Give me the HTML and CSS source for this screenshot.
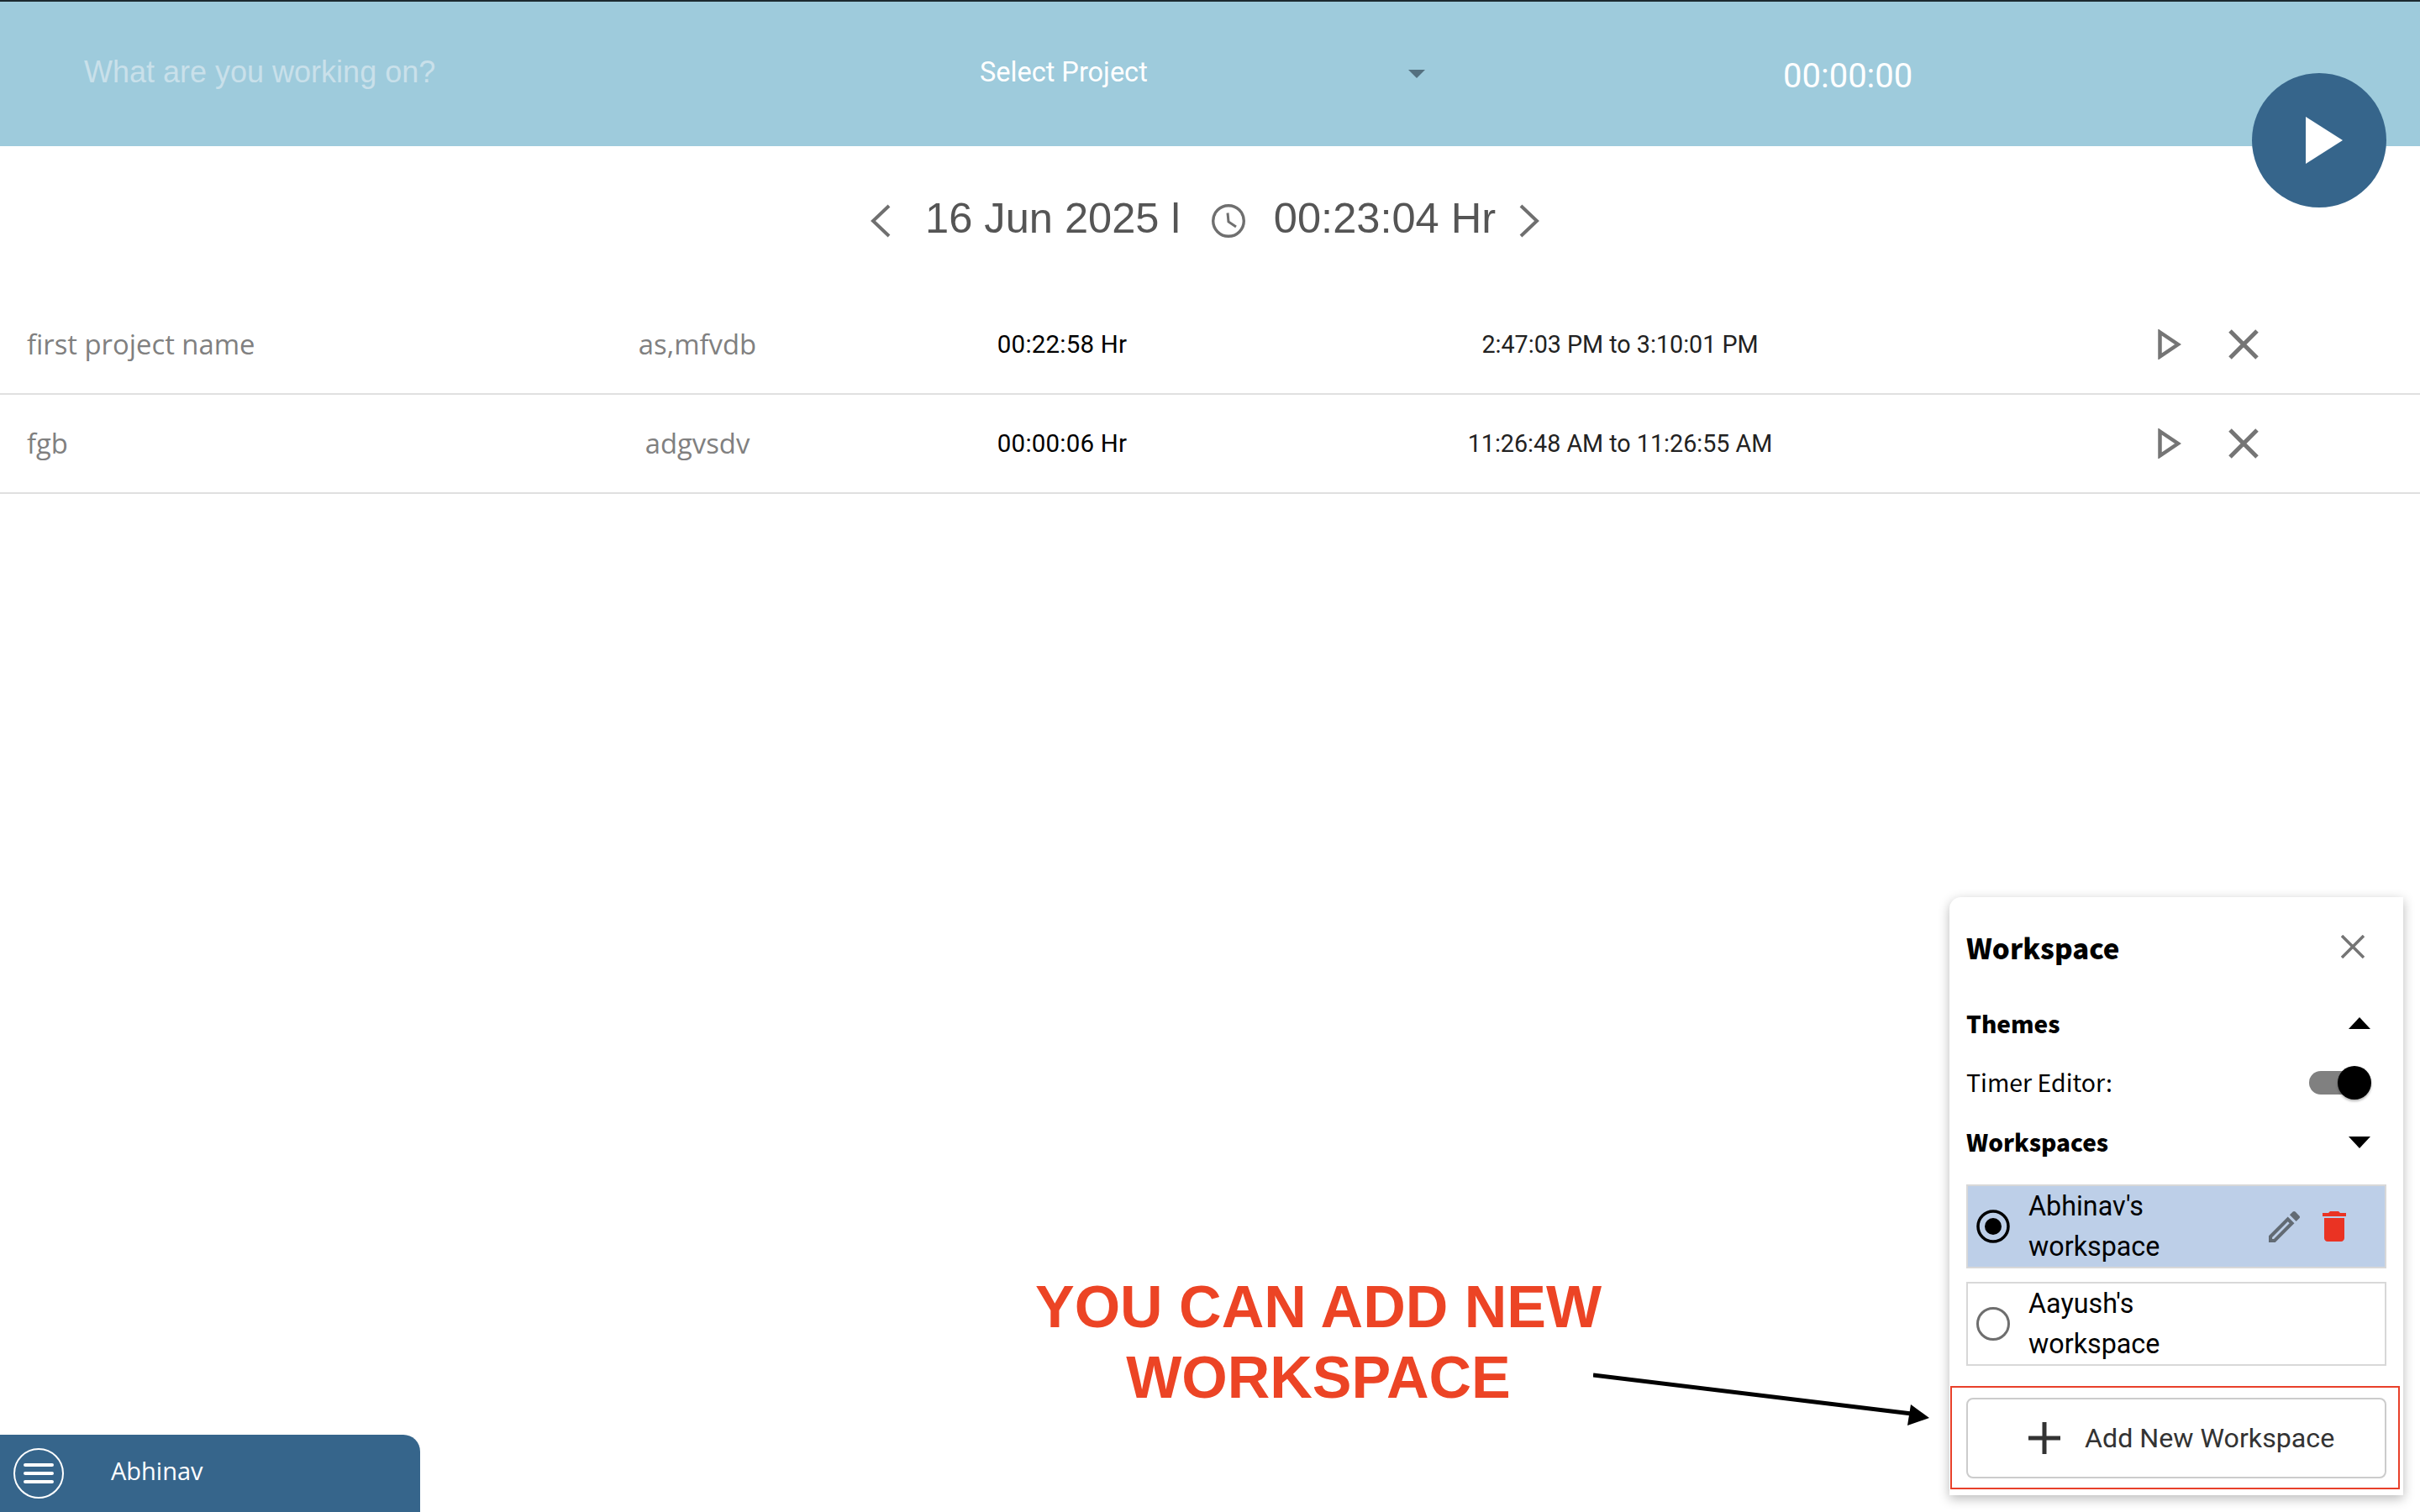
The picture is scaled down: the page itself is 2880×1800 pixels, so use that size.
FILE: index.html
```html
<!DOCTYPE html>
<html lang="en">
<head>
  <meta charset="UTF-8">
  <title>Timer</title>
  <link rel="stylesheet" href="styles.css">
</head>
<body>
<div class="timer-bar">
  <div class="task-input">What are you working on?</div>
  <div class="project-select">
    <span>Select Project</span>
    <svg class="caret" width="20" height="10" viewBox="0 0 20 10"><path d="M0 0h20L10 10z" fill="#54707f"/></svg>
  </div>
  <div class="timer-value">00:00:00</div>
</div>

<div class="date-row">
  <svg class="chev chev-prev" width="26" height="40" viewBox="0 0 26 40"><path d="M23 2 4 20l19 18" fill="none" stroke="#6f6f6f" stroke-width="4"/></svg>
  <span class="date-text">16 Jun 2025 l</span>
  <svg class="clock" width="40" height="40" viewBox="0 0 40 40"><circle cx="20" cy="20" r="18.300" fill="none" stroke="#6f6f6f" stroke-width="3.400"/><path d="M19 10.500 20 21l9 6" fill="none" stroke="#6f6f6f" stroke-width="3"/></svg>
  <span class="date-text">00:23:04 Hr</span>
  <svg class="chev chev-next" width="26" height="40" viewBox="0 0 26 40"><path d="M3 2l19 18L3 38" fill="none" stroke="#6f6f6f" stroke-width="4"/></svg>
</div>

<div class="entries">
  <div class="entry">
    <div class="entry-name">first project name</div>
    <div class="entry-project">as,mfvdb</div>
    <div class="entry-time">00:22:58 Hr</div>
    <div class="entry-range">2:47:03 PM to 3:10:01 PM</div>
    <div class="entry-actions">
      <svg width="28" height="36" viewBox="0 0 28 36"><path d="M2.500 3.500 24 18 2.500 32.500z" fill="none" stroke="#757575" stroke-width="4.500"/></svg>
      <svg width="36" height="36" viewBox="0 0 36 36"><path d="M2 2l32 32M34 2 2 34" stroke="#757575" stroke-width="5"/></svg>
    </div>
  </div>
  <div class="entry">
    <div class="entry-name">fgb</div>
    <div class="entry-project">adgvsdv</div>
    <div class="entry-time">00:00:06 Hr</div>
    <div class="entry-range">11:26:48 AM to 11:26:55 AM</div>
    <div class="entry-actions">
      <svg width="28" height="36" viewBox="0 0 28 36"><path d="M2.500 3.500 24 18 2.500 32.500z" fill="none" stroke="#757575" stroke-width="4.500"/></svg>
      <svg width="36" height="36" viewBox="0 0 36 36"><path d="M2 2l32 32M34 2 2 34" stroke="#757575" stroke-width="5"/></svg>
    </div>
  </div>
</div>

<div class="play-btn">
  <svg width="44" height="56" viewBox="0 0 44 56"><path d="M0 0l44 28L0 56z" fill="#fff"/></svg>
</div>

<div class="note">YOU CAN ADD NEW<br>WORKSPACE</div>
<svg class="note-arrow" width="400" height="70" viewBox="0 0 400 70">
  <path d="M0 5 379 51" stroke="#000" stroke-width="5"/>
  <path d="M378 40l22 16-26 9z" fill="#000"/>
</svg>

<div class="side-tab">
  <svg width="60" height="60" viewBox="0 0 60 60"><circle cx="30" cy="30" r="29" fill="none" stroke="#fff" stroke-width="2"/><path d="M14 20h32M14 30h32M14 40h32" stroke="#fff" stroke-width="4" stroke-linecap="round"/></svg>
  <span>Abhinav</span>
</div>

<div class="panel">
  <div class="panel-head">
    <span class="panel-title">Workspace</span>
    <svg width="28" height="28" viewBox="0 0 28 28"><path d="M1 1l26 26M27 1 1 27" stroke="#757575" stroke-width="3.500"/></svg>
  </div>
  <div class="panel-sec sec-themes">
    <span>Themes</span>
    <svg width="26" height="14" viewBox="0 0 26 14"><path d="M0 14 13 0l13 14z" fill="#000"/></svg>
  </div>
  <div class="timer-editor">
    <span>Timer Editor:</span>
    <div class="switch"><div class="switch-thumb"></div></div>
  </div>
  <div class="panel-sec sec-workspaces">
    <span>Workspaces</span>
    <svg width="26" height="14" viewBox="0 0 26 14"><path d="M0 0h26L13 14z" fill="#000"/></svg>
  </div>
  <div class="ws-item ws-active">
    <svg width="40" height="40" viewBox="0 0 40 40"><circle cx="20" cy="20" r="18" fill="none" stroke="#000" stroke-width="3.500"/><circle cx="20" cy="20" r="10" fill="#000"/></svg>
    <div class="ws-name">Abhinav's workspace</div>
    <div class="ws-tools">
      <svg width="37" height="37" viewBox="3 3 18 18"><path d="M3 17.250V21h3.750L17.810 9.940l-3.750-3.750L3 17.250zM5.920 19H5v-.92l9.060-9.060.92.92L5.920 19zM20.710 7.040c.39-.39.39-1.020 0-1.410l-2.340-2.340c-.2-.2-.45-.29-.71-.29s-.51.09-.7.29l-1.830 1.830 3.750 3.750 1.830-1.830z" fill="#626b74"/></svg>
      <svg width="28" height="36" viewBox="5 3 14 18"><path d="M6 19c0 1.100.9 2 2 2h8c1.100 0 2-.9 2-2V7H6v12zM19 4h-3.500l-1-1h-5l-1 1H5v2h14V4z" fill="#ea3323"/></svg>
    </div>
  </div>
  <div class="ws-item">
    <svg width="40" height="40" viewBox="0 0 40 40"><circle cx="20" cy="20" r="18.500" fill="none" stroke="#6e6e6e" stroke-width="3"/></svg>
    <div class="ws-name">Aayush's workspace</div>
  </div>
  <div class="add-highlight">
    <div class="add-btn">
      <svg width="38" height="38" viewBox="0 0 38 38"><path d="M19 0v38M0 19h38" stroke="#333" stroke-width="5"/></svg>
      <span>Add New Workspace</span>
    </div>
  </div>
</div>
</body>
</html>
```

FILE: styles.css
```css
html, body { margin: 0; padding: 0; }
body { width: 2880px; height: 1800px; background: #fff; position: relative; overflow: hidden; font-family: "Liberation Sans", sans-serif; }
svg { display: block; flex: none; }

.timer-bar { height: 172px; background: #9ecbdc; border-top: 2px solid #1c2a30; display: flex; align-items: flex-start; color: #fff; }
.task-input { margin: 63px 0 0 100px; width: 1066px; font-size: 36px; line-height: 42px; color: #c9e0ea; }
.project-select { margin-top: 65px; width: 530px; display: flex; align-items: center; font-family: Roboto, sans-serif; font-size: 32.500px; line-height: 38px; }
.project-select span { width: 512px; }
.caret { margin-top: 4px; }
.timer-value { margin: 66px 0 0 426px; font-family: Roboto, sans-serif; font-size: 40px; line-height: 46px; }

.date-row { height: 178px; box-sizing: border-box; padding: 0 0 6px 1035px; display: flex; align-items: center; color: #555; }
.date-text { font-size: 50.600px; line-height: 60px; white-space: nowrap; }
.chev { margin-top: 6px; }
.chev-prev { margin-right: 40px; }
.chev-next { margin-left: 27px; }
.clock { margin: 6px 34px 0 37px; }

.entry { height: 116px; border-bottom: 2px solid #e0e0e0; display: grid; grid-template-columns: 600px 460px 408px 920px 1fr; align-items: center; }
.entry-name { padding: 0 0 2px 32px; font-family: "Open Sans", sans-serif; font-size: 32.800px; color: #808080; }
.entry-project { padding-bottom: 2px; text-align: center; font-family: "Open Sans", sans-serif; font-size: 32.800px; color: #808080; }
.entry-time { text-align: center; font-family: Roboto, sans-serif; font-size: 29.500px; letter-spacing: .2px; color: #000; }
.entry-range { text-align: center; font-family: Roboto, sans-serif; font-size: 28.700px; color: #222; }
.entry-actions { padding-left: 180px; display: flex; gap: 56px; }

.play-btn { position: absolute; left: 2680px; top: 87px; width: 160px; height: 160px; border-radius: 50%; background: #36658b; display: flex; align-items: center; justify-content: center; padding-left: 12px; box-sizing: border-box; }

.note { position: absolute; left: 1169px; top: 1514px; width: 800px; text-align: center; font-size: 70px; line-height: 84px; font-weight: 700; color: #ec4425; }
.note-arrow { position: absolute; left: 1896px; top: 1632px; }

.side-tab { position: absolute; left: 0; top: 1708px; width: 500px; height: 92px; box-sizing: border-box; padding: 0 0 8px 16px; background: #36658b; border-top-right-radius: 20px; display: flex; align-items: center; gap: 56px; color: #fff; font-family: "Open Sans", sans-serif; font-size: 29px; }
.side-tab svg { margin-top: 8px; }

.panel { position: absolute; left: 2320px; top: 1068px; width: 540px; height: 712px; box-sizing: border-box; padding: 0 20px; background: #fff; border-top-left-radius: 14px; box-shadow: 0 4px 14px rgba(0, 0, 0, .28); font-family: "Noto Sans CJK JP", sans-serif; }
.panel-head { height: 92px; padding-top: 26px; box-sizing: border-box; display: flex; justify-content: space-between; align-items: center; }
.panel-head svg { margin-right: 26px; }
.panel-title { padding-top: 2px; font-size: 33px; font-weight: 900; color: #000; }
.panel-sec { display: flex; justify-content: space-between; align-items: center; font-size: 28px; font-weight: 900; color: #000; padding-right: 19px; }
.sec-themes { height: 60px; margin-top: 28px; }
.timer-editor { height: 78px; display: flex; justify-content: space-between; align-items: center; font-size: 28.500px; color: #000; }
.sec-workspaces { height: 66px; }
.sec-workspaces svg { margin-top: 2px; }
.switch { position: relative; margin: 3px 22px 0 0; width: 70px; height: 28px; border-radius: 14px; background: #808080; }
.switch-thumb { position: absolute; right: -4px; top: -6px; width: 40px; height: 40px; border-radius: 50%; background: #000; box-shadow: 0 2px 3px rgba(0, 0, 0, .3); }

.ws-item { height: 100px; box-sizing: border-box; border: 2px solid #d8d8d8; display: flex; align-items: center; padding-left: 10px; margin-bottom: 16px; font-family: Roboto, sans-serif; font-size: 32.300px; line-height: 48px; color: #000; }
.sec-workspaces + .ws-item { margin-top: 18px; }
.ws-active { background: #bdcfe8; }
.ws-name { margin-left: 22px; width: 200px; }
.ws-tools { margin-left: auto; margin-right: 46px; display: flex; align-items: center; gap: 27px; }

.add-highlight { margin: 24px 0 0 -19px; width: 535px; height: 123px; box-sizing: border-box; border: 2px solid #e8402a; padding: 12px 14px 0 17px; }
.add-btn { height: 96px; box-sizing: border-box; border: 2px solid #ccc; border-radius: 8px; padding-left: 72px; display: flex; align-items: center; gap: 29px; font-family: Roboto, sans-serif; font-size: 32.200px; color: #333; }
```
